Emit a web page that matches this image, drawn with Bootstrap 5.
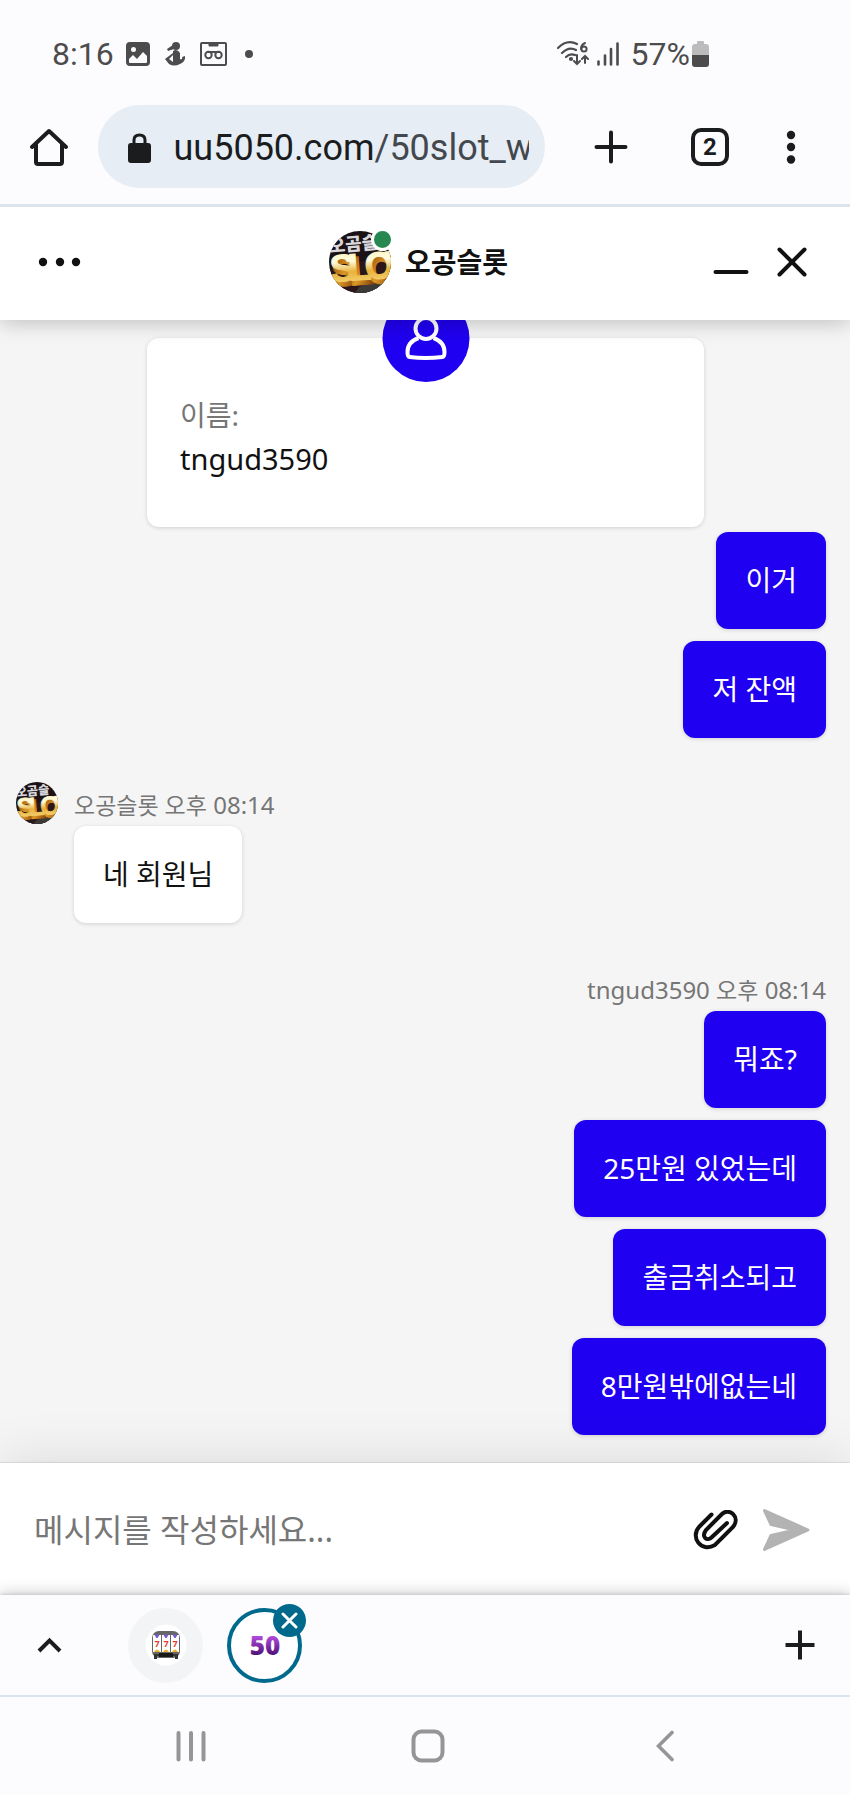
<!DOCTYPE html>
<html lang="ko">
<head>
<meta charset="utf-8">
<meta name="viewport" content="width=device-width, initial-scale=1">
<title>오공슬롯</title>
<link href="https://cdn.jsdelivr.net/npm/bootstrap@5.3.0/dist/css/bootstrap.min.css" rel="stylesheet">
<style>
  :root { --chrome: #fcfcff; --line: #dde3ea; --ink: #1a1c1e; --blue: #2000f0; --muted: #767676; }
  body { font-family: "Noto Sans", "Noto Sans CJK KR", sans-serif; color: #111; background: var(--chrome); }
  svg { display: block; flex: none; }
  .btn { --bs-btn-color: #111; --bs-btn-border-width: 0; display: flex; align-items: center; justify-content: center; }
  .chrome-font { font-family: Roboto, sans-serif; }

  .status-bar { height: 105px; padding: 2px 141px 0 52px; font-size: 32px; line-height: 40px; color: #4c4c4c; }
  .status-icons { gap: 15px; margin-left: 12px; }
  .battery { margin-left: 2px; }
  .address-row { padding: 0 27px 16px 18px; border-bottom: 3px solid var(--line); background: var(--chrome); z-index: 3; }
  .home-btn { width: 62px; }
  .tool-btn { width: 100px; }
  .menu-btn { width: 64px; }
  .address-row .url { height: 83px; margin: 0 16px 0 19px; padding: 2px 16px 0 30px; border-radius: 42px; background: #e6edf4; color: #43484e; font-size: 36px; line-height: 48px; min-width: 0; }
  .url-text { text-align: left; margin-left: 22px; overflow: hidden; white-space: nowrap; }
  .url-host { color: var(--ink); }
  .tab-count { width: 38px; height: 38px; border: 4px solid var(--ink); border-radius: 10px; font-size: 24px; line-height: 30px; font-weight: 700; color: var(--ink); }

  .chat-head { height: 113px; padding: 0 43px 4px 30px; background: #fff; box-shadow: 0 3px 20px rgba(0,0,0,.22); z-index: 2; }
  .chat-head h1 { font-size: 28px; line-height: 40px; }
  .brand-row { gap: 14px; }
  .avatar { width: 62px; height: 62px; }
  .online { width: 23px; height: 23px; top: -3px; right: -3px; border: 3px solid #fff; background: #268750; }
  .close-btn { margin-left: 28px; }

  .chat-log { padding: 18px 24px 28px 16px; background: #f5f5f5; }
  .soft { box-shadow: 0 1px 4px rgba(0,0,0,.15); border-radius: 12px; }
  .profile { width: 557px; height: 189px; margin: 0 auto 5px 131px; padding: 55px 33px 0; background: #fff; font-size: 29px; line-height: 44px; }
  .profile dt { font-size: 28px; font-weight: 400; color: var(--muted); }
  .profile-icon { width: 87px; height: 87px; top: -43px; background: var(--blue); }
  .bubble { padding: 28px 29px; font-size: 28px; line-height: 41px; }
  .bubble-me { background: var(--blue); color: #fff; }
  .stack { gap: 12px; }
  .meta { margin-bottom: 5px; font-size: 24px; line-height: 32px; color: var(--muted); }
  .meta-ko { font-size: 23px; }
  .msg-group { margin-top: 51px; }
  .small-avatar { width: 42px; height: 42px; margin-top: -7px; margin-right: 16px; }

  .composer { height: 132px; padding: 2px 39px 0 34px; background: #fff; box-shadow: 0 -8px 50px rgba(0,0,0,.09), 0 -1px 1px rgba(0,0,0,.08); z-index: 1; }
  .composer input { font-size: 32px; line-height: 48px; min-width: 0; }
  .composer input::placeholder { color: var(--muted); opacity: 1; }
  .send-btn { margin-left: 22px; }

  .tab-strip { height: 102px; padding: 0 35px 0 37px; background: var(--chrome); border-bottom: 2px solid var(--line); box-shadow: 0 -2px 14px rgba(0,0,0,.2), 0 -1px 3px rgba(0,0,0,.12); z-index: 2; }
  .site-tab { width: 75px; height: 75px; }
  .tab-slot { margin-left: 66px; background: #f2f4f5; }
  .tab-fifty { border: 4px solid #00698c; background: #fff; }
  .tab-close { width: 33px; height: 33px; top: -4px; right: -4px; background: #00698c; }
  .soft-keys { height: 97px; padding: 0 66px 0 72px; background: var(--chrome); z-index: 3; }
</style>
</head>
<body>
<svg width="0" height="0" class="position-absolute" aria-hidden="true">
  <defs>
    <linearGradient id="gold" x1="0" y1="0" x2="0" y2="1">
      <stop offset="0" stop-color="#fff3ae"/><stop offset=".35" stop-color="#fffbe0"/>
      <stop offset=".6" stop-color="#e8b23a"/><stop offset="1" stop-color="#fbe08a"/>
    </linearGradient>
    <linearGradient id="bronze" x1="0" y1="0" x2="1" y2="1">
      <stop offset="0" stop-color="#7b3708"/><stop offset=".5" stop-color="#dc9825"/><stop offset="1" stop-color="#6b2906"/>
    </linearGradient>
    <linearGradient id="purple" x1="0" y1="0" x2="0" y2="1">
      <stop offset=".25" stop-color="#b44be0"/><stop offset=".8" stop-color="#4a0f70"/>
    </linearGradient>
    <clipPath id="disc"><circle cx="31" cy="31" r="31"/></clipPath>
    <symbol id="brand" viewBox="0 0 62 62">
      <g clip-path="url(#disc)">
        <rect width="62" height="62" fill="#1c1216"/>
        <path d="M0 38L62 24V62H0Z" fill="#2b1719"/><path d="M30 56L62 44V62H26Z" fill="#3b3a36"/>
        <g font-family="Noto Sans CJK KR, sans-serif" font-weight="900" font-size="18" transform="rotate(-5 20 18)">
          <text x="0" y="20" fill="#d8d8dc">오곰슬</text>
        </g>
        <g font-family="Liberation Sans Narrow, Liberation Sans, sans-serif" font-weight="700" font-size="38" transform="rotate(-4 30 40)">
          <g fill="url(#bronze)" stroke="url(#bronze)" stroke-width="3"><text x="3" y="53">S</text><text x="21" y="53">L</text><text x="38" y="53">O</text><text x="59" y="53">T</text></g>
          <g fill="url(#gold)" stroke="url(#gold)" stroke-width="1"><text x="1" y="49">S</text><text x="19" y="49">L</text><text x="36" y="49">O</text><text x="57" y="49">T</text></g>
        </g>
      </g>
    </symbol>
  </defs>
</svg>

<div class="d-flex flex-column min-vh-100">
  <header class="status-bar chrome-font d-flex align-items-center justify-content-between">
    <div class="d-flex align-items-center">
      <time>8:16</time>
      <div class="status-icons d-flex align-items-center">
        <svg width="24" height="24" viewBox="0 0 24 24" fill="#4c4c4c"><path fill-rule="evenodd" d="M4 0H20Q24 0 24 4V20Q24 24 20 24H4Q0 24 0 20V4Q0 0 4 0ZM3 17V20Q3 21 4 21H20Q21 21 21 20V14L17 10 11 17 7 13ZM7.500 5A2.500 2.500 0 1 0 7.500 10A2.500 2.500 0 1 0 7.500 5Z"/></svg>
        <svg width="20" height="24" viewBox="0 0 20 24" fill="#4c4c4c"><circle cx="11" cy="4" r="4"/><path d="M8 3L2 7 3 9 9 7Z"/><path d="M8 9Q12 6 15 11V17Q18 18 17 15L20 14Q21 19 15 22Q9 25 4 22L0 17 8 11ZM8 13L4 17 8 20Z" fill-rule="evenodd"/></svg>
        <svg width="27" height="24" viewBox="0 0 27 24" fill="none" stroke="#4c4c4c"><rect x="1" y="1" width="25" height="22" rx="1" stroke-width="2"/><path d="M9 2H18V4H9Z" fill="#4c4c4c"/><g stroke-width="2"><circle cx="8.500" cy="13" r="3.200"/><circle cx="18.500" cy="13" r="3.200"/><path d="M8 10H19"/></g></svg>
        <svg width="14" height="24" viewBox="0 0 14 24"><circle cx="7" cy="12" r="4" fill="#4c4c4c"/></svg>
      </div>
    </div>
    <div class="d-flex align-items-center">
      <svg width="32" height="25" viewBox="0 0 32 25" fill="none" stroke="#4c4c4c" stroke-width="2.200" stroke-linecap="round"><path d="M1 7Q10-2 20 3M5 12Q12 5 19 9M9 16Q13 12 18 14"/><circle cx="14" cy="18" r="1" fill="#4c4c4c"/><path d="M20 14V23M17 20L20 23 23 20M28 22V15M25 18L28 15 31 18" stroke-width="2"/><path d="M28 2Q24 4 24 8" stroke-width="2"/><circle cx="27" cy="8" r="2.600" stroke-width="2"/></svg>
      <svg class="ms-2" width="22" height="24" viewBox="0 0 22 24" fill="none" stroke="#4c4c4c" stroke-width="2.600" stroke-linecap="round"><path d="M1.500 19.500V22.500M8 13.500V22.500M14 7V22.500M20.500 1.500V22.500"/></svg>
      <span class="ms-2 ps-1">57%</span>
      <svg class="battery" width="17" height="26" viewBox="0 0 17 26"><path d="M5 3V1Q5 0 6 0H11Q12 0 12 1V3H14Q17 3 17 6V14H0V6Q0 3 3 3Z" fill="#bcbcbc"/><path d="M0 14H17V23Q17 26 14 26H3Q0 26 0 23Z" fill="#4c4c4c"/></svg>
    </div>
  </header>

  <nav class="address-row chrome-font d-flex align-items-center position-relative" aria-label="브라우저">
    <button class="btn p-0 home-btn" aria-label="홈"><svg width="38" height="40" viewBox="0 0 38 40" fill="none" stroke="#1a1c1e" stroke-width="4" stroke-linecap="round" stroke-linejoin="round"><path d="M2 20L19 4 36 20M6 17V35Q6 37 8 37H30Q32 37 32 35V17"/></svg></button>
    <button class="btn url flex-grow-1 justify-content-start" aria-label="주소">
      <svg width="23" height="30" viewBox="0 0 23 30"><path d="M6 12V7Q6 2 11.500 2T17 7V12" fill="none" stroke="#1a1c1e" stroke-width="3"/><rect y="10" width="23" height="20" rx="3" fill="#1a1c1e"/></svg>
      <span class="url-text flex-grow-1"><span class="url-host">uu5050.com</span>/50slot_w</span>
    </button>
    <button class="btn p-0 tool-btn" aria-label="새 탭"><svg width="34" height="34" viewBox="0 0 34 34" stroke="#1a1c1e" stroke-width="4" stroke-linecap="round"><path d="M17 2.500V31.500M2.500 17H31.500"/></svg></button>
    <button class="btn p-0 tool-btn" aria-label="탭 2개"><span class="tab-count d-block">2</span></button>
    <button class="btn p-0 menu-btn" aria-label="메뉴"><svg width="10" height="34" viewBox="0 0 10 34" fill="#1a1c1e"><circle cx="5" cy="5" r="4.200"/><circle cx="5" cy="17" r="4.200"/><circle cx="5" cy="29.500" r="4.200"/></svg></button>
  </nav>

  <div class="chat-head d-flex align-items-center position-relative">
    <div class="flex-fill d-flex w-25"><button class="btn p-0" aria-label="옵션"><svg width="60" height="40" viewBox="0 0 60 40" fill="#111"><circle cx="13" cy="20" r="4.200"/><circle cx="30" cy="20" r="4.200"/><circle cx="46" cy="20" r="4.200"/></svg></button></div>
    <div class="brand-row d-flex align-items-center">
      <div class="avatar position-relative"><svg width="62" height="62"><use href="#brand"/></svg><span class="online position-absolute rounded-circle"></span></div>
      <h1 class="m-0 fw-bold">오공슬롯</h1>
    </div>
    <div class="flex-fill d-flex w-25 justify-content-end">
      <button class="btn p-0" aria-label="최소화"><svg width="36" height="32" viewBox="0 0 36 32" stroke="#111" stroke-width="4" stroke-linecap="round"><path d="M2.500 26H33.500"/></svg></button>
      <button class="btn p-0 close-btn" aria-label="닫기"><svg width="30" height="32" viewBox="0 0 30 32" stroke="#111" stroke-width="4" stroke-linecap="round"><path d="M2.500 3.500L27.500 28.500M27.500 3.500L2.500 28.500"/></svg></button>
    </div>
  </div>

  <main class="chat-log flex-grow-1">
    <section class="profile soft position-relative">
      <div class="profile-icon position-absolute start-50 translate-middle-x rounded-circle d-flex justify-content-center">
        <svg width="87" height="87" viewBox="0 0 87 87" fill="none" stroke="#fff" stroke-width="4"><circle cx="43.500" cy="33.500" r="10.500"/><path d="M36 43Q25 47 25 57Q25 62 27 62Q43 64 60 62Q62 62 62 57Q62 47 51 43" stroke-linejoin="round"/></svg>
      </div>
      <dl class="m-0"><dt>이름:</dt><dd class="m-0">tngud3590</dd></dl>
    </section>
    <div class="stack d-flex flex-column align-items-end">
      <div class="bubble bubble-me soft">이거</div>
      <div class="bubble bubble-me soft">저 잔액</div>
    </div>

    <div class="msg-group d-flex align-items-start">
      <svg class="small-avatar" width="42" height="42"><use href="#brand"/></svg>
      <div class="d-flex flex-column align-items-start">
        <div class="meta"><span class="meta-ko">오공슬롯 오후</span> 08:14</div>
        <div class="bubble bg-white soft">네 회원님</div>
      </div>
    </div>

    <div class="msg-group d-flex flex-column align-items-end">
      <div class="meta">tngud3590 <span class="meta-ko">오후</span> 08:14</div>
      <div class="stack d-flex flex-column align-items-end">
        <div class="bubble bubble-me soft">뭐죠?</div>
        <div class="bubble bubble-me soft">25만원 있었는데</div>
        <div class="bubble bubble-me soft">출금취소되고</div>
        <div class="bubble bubble-me soft">8만원밖에없는네</div>
      </div>
    </div>
  </main>

  <form class="composer d-flex align-items-center position-relative">
    <input type="text" class="form-control border-0 shadow-none bg-transparent p-0 flex-grow-1" placeholder="메시지를 작성하세요..." aria-label="메시지">
    <button type="button" class="btn p-0" aria-label="파일 첨부"><svg width="46" height="40" viewBox="0 0 46 40" fill="none" stroke="#111" stroke-width="4" stroke-linecap="round"><path d="M18.500 4.500L6 17C-3 27 8 43 22 35L40 17C48 7 36-3 29 4L13 20C8 27 14 32 19 27L34 13"/></svg></button>
    <button type="submit" class="btn p-0 send-btn" aria-label="보내기"><svg width="50" height="44" viewBox="0 0 50 44" fill="#b3b3b3" stroke="#b3b3b3" stroke-width="3" stroke-linejoin="round"><path d="M3.500 2.500L47 22 3.500 41.500 10 27.500 34 22 10 16.500Z"/></svg></button>
  </form>

  <nav class="tab-strip d-flex align-items-center position-relative" aria-label="탭 그룹">
    <button class="btn p-0" aria-label="펼치기"><svg width="25" height="18" viewBox="0 0 25 18" fill="none" stroke="#1a1c1e" stroke-width="4"><path d="M2 15L12.500 4.500 23 15"/></svg></button>
    <button class="btn p-0 site-tab tab-slot rounded-circle" aria-label="슬롯 탭">
      <svg width="42" height="42" viewBox="0 0 42 42"><circle cx="21" cy="21" r="20.500" fill="#fff"/><rect x="7" y="7" width="28" height="27" rx="7" fill="#666"/><path d="M9 30H33V35H30V32H12V35H9Z" fill="#333"/><rect x="14" y="29" width="14" height="4" fill="#181818"/><g fill="#fff"><rect x="8" y="11" width="8" height="17"/><rect x="17" y="11" width="8" height="17"/><rect x="26" y="11" width="8" height="17"/></g><path d="M10 11H14L12 14ZM19 11H23L21 14ZM28 11H32L30 14Z" fill="#765bd0" stroke="#765bd0"/><path d="M9 28Q12 23 15 28ZM18 28Q21 23 24 28ZM27 28Q30 23 33 28Z" fill="#f0ae20"/><g fill="#e63a2e" font-family="Noto Sans, sans-serif" font-size="9" font-weight="700" text-anchor="middle"><text x="12" y="23">7</text><text x="21" y="23">7</text><text x="30" y="23">7</text></g></svg>
    </button>
    <div class="position-relative ms-4">
      <button class="btn p-0 site-tab tab-fifty rounded-circle" aria-label="50 탭">
        <svg width="44" height="44" viewBox="0 0 44 44"><text x="22" y="32" text-anchor="middle" font-family="Noto Sans, sans-serif" font-size="26" font-weight="900" fill="url(#purple)">50</text></svg>
      </button>
      <button class="btn p-0 tab-close position-absolute rounded-circle" aria-label="탭 닫기"><svg width="17" height="17" viewBox="0 0 17 17" stroke="#fff" stroke-width="3" stroke-linecap="round"><path d="M2 2L15 15M15 2L2 15"/></svg></button>
    </div>
    <button class="btn p-0 ms-auto" aria-label="탭 추가"><svg width="30" height="30" viewBox="0 0 30 30" stroke="#1a1c1e" stroke-width="4"><path d="M15 .5V29.500M.5 15H29.500"/></svg></button>
  </nav>

  <footer class="soft-keys d-flex align-items-center position-relative">
    <button class="btn p-0 col" aria-label="최근 앱"><svg width="30" height="32" viewBox="0 0 30 32" stroke="#959598" stroke-width="4" stroke-linecap="round"><path d="M2.500 3V29.500M15 3V29.500M27.500 3V29.500"/></svg></button>
    <button class="btn p-0 col" aria-label="홈 화면"><svg width="34" height="34" viewBox="0 0 34 34" fill="none" stroke="#959598" stroke-width="4"><rect x="2.500" y="2.500" width="29" height="29" rx="8"/></svg></button>
    <button class="btn p-0 col" aria-label="뒤로"><svg width="18" height="32" viewBox="0 0 18 32" fill="none" stroke="#959598" stroke-width="3.600" stroke-linecap="round"><path d="M16 2.500L2.500 16 16 29.500"/></svg></button>
  </footer>
</div>
<script src="https://cdn.jsdelivr.net/npm/bootstrap@5.3.0/dist/js/bootstrap.bundle.min.js"></script>
</body>
</html>
